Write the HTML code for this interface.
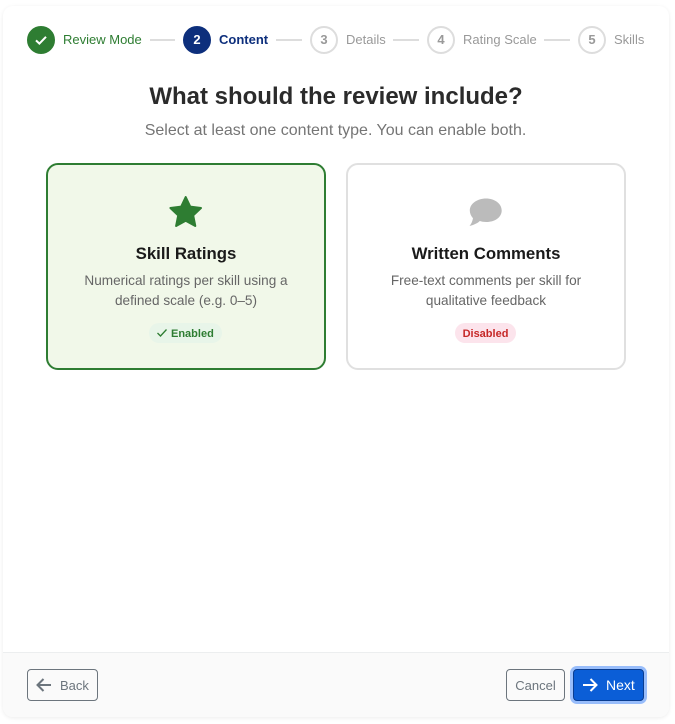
<!DOCTYPE html>
<html lang="en">
<head>
<meta charset="utf-8">
<title>Review</title>
<style>
*{box-sizing:border-box}
html,body{margin:0;padding:0;width:675px;height:724px;overflow:hidden;background:#fff;font-family:"Liberation Sans",sans-serif}
.abs,.c,.t,.l,.card,.btn,.badge{position:absolute}
#panel{position:absolute;left:3px;top:6px;width:666px;height:711px;background:#fff;border-radius:10px;box-shadow:0 1px 4px rgba(0,0,0,.08);overflow:hidden}
#foot{position:absolute;left:3px;top:652px;width:666px;height:65px;background:#fafafa;border-top:1px solid #eceeef;border-radius:0 0 10px 10px}
.c{top:26px;width:28px;height:28px;border-radius:50%;border:2px solid #ddd;color:#999;background:#fff;font-size:13px;font-weight:700;display:flex;align-items:center;justify-content:center;padding-bottom:1px}
.t{top:32px;font-size:13px;line-height:16px;color:#999;white-space:nowrap}
.l{top:39px;height:2px;background:#ddd}
h1{position:absolute;left:0;width:672px;top:81.500px;margin:0;text-align:center;font-size:24px;line-height:29px;font-weight:700;color:#2b2b2b}
.sub{position:absolute;left:0;width:671px;top:121px;text-align:center;font-size:16px;line-height:20px;color:#757575}
.card{top:163px;width:280px;height:207px;border-radius:12px;border:2px solid #e0e0e0;background:#fff}
.card.on{border-color:#2e7d32;background:#f1f8e9}
.ct{position:absolute;left:0;right:0;top:79px;text-align:center;font-size:16.800px;line-height:20px;font-weight:700;color:#1a1a1a}
.cd{position:absolute;left:0;right:0;top:106px;text-align:center;font-size:13.600px;line-height:20px;color:#666}
.badge{top:323px;height:20px;border-radius:10px;font-size:11px;line-height:22px;font-weight:700;white-space:nowrap}
.btn{top:669px;height:32px;border-radius:4px;border:1px solid #6c757d;font-size:13px;line-height:31px;color:#6c757d;white-space:nowrap}
</style>
</head>
<body>
<div id="panel"></div>
<div id="foot"></div>

<div class="c" style="left:27px;background:#2e7d32;border-color:#2e7d32">
<svg width="14" height="14" viewBox="0 0 14 14"><path d="M2 7.400 5.400 10.600 12 3.800" fill="none" stroke="#fff" stroke-width="2"/></svg>
</div>
<div class="t" style="left:63px;color:#2e7d32">Review Mode</div>
<div class="l" style="left:150px;width:25px"></div>
<div class="c" style="left:183px;background:#0d2f7c;border-color:#0d2f7c;color:#fff">2</div>
<div class="t" style="left:219px;color:#0d2f7c;font-weight:700">Content</div>
<div class="l" style="left:276px;width:26px"></div>
<div class="c" style="left:310px">3</div>
<div class="t" style="left:346px">Details</div>
<div class="l" style="left:393px;width:26px"></div>
<div class="c" style="left:427px">4</div>
<div class="t" style="left:463px">Rating Scale</div>
<div class="l" style="left:544px;width:26px"></div>
<div class="c" style="left:578px">5</div>
<div class="t" style="left:614px">Skills</div>

<h1>What should the review include?</h1>
<div class="sub">Select at least one content type. You can enable both.</div>

<div class="card on" style="left:46px">
<div class="ct">Skill Ratings</div>
<div class="cd">Numerical ratings per skill using a<br>defined scale (e.g. 0–5)</div>
</div>
<div class="card" style="left:346px">
<div class="ct">Written Comments</div>
<div class="cd">Free-text comments per skill for<br>qualitative feedback</div>
</div>

<svg class="abs" style="left:168px;top:195px" width="36" height="34" viewBox="0 0 36 34">
<path d="M17.700 2 22.200 11.600 33 13 25.200 20.400 27.300 31 17.700 25.800 8.100 31 10.200 20.400 2.400 13 13.200 11.600Z" fill="#2e7d32" stroke="#2e7d32" stroke-width="2" stroke-linejoin="round"/>
</svg>
<svg class="abs" style="left:468px;top:196px" width="36" height="32" viewBox="0 0 36 32">
<path d="M18 2.500C26.500 2.500 33.700 7.500 33.700 14.500 33.700 21.500 26.500 26 18.500 26 15.500 26 13.500 25.500 11.800 25 9 27.800 5 29 1.500 30 3.800 27.500 4.500 24.500 5 22.300 3 20 1.800 17.500 1.800 14.500 1.800 7.500 9.500 2.500 18 2.500Z" fill="#bbb"/>
</svg>

<div class="badge" style="left:149px;width:73px;background:#e8f5e9;color:#2e7d32;padding-left:22px">Enabled</div>
<svg class="abs" style="left:156px;top:328px" width="12" height="10" viewBox="0 0 12 10"><path d="M1.500 5 4.500 8 10.500 1.500" fill="none" stroke="#2e7d32" stroke-width="1.300"/></svg>
<div class="badge" style="left:455px;width:61px;background:#fce4ec;color:#c62828;text-align:center">Disabled</div>

<div class="btn" style="left:27px;width:71px;padding-left:32px">Back</div>
<svg class="abs" style="left:35px;top:677px" width="18" height="16" viewBox="0 0 18 16"><path d="M16 8H3M8.500 2 2.500 8 8.500 14" fill="none" stroke="#6c757d" stroke-width="2"/></svg>
<div class="btn" style="left:506px;width:59px;text-align:center">Cancel</div>
<div class="btn" style="left:573px;width:71px;background:#0b5ed7;border-color:#0a3d91;color:#fff;padding-left:32px;font-size:14px;line-height:30px;box-shadow:0 0 0 3px #98bdfb">Next</div>
<svg class="abs" style="left:581px;top:677px" width="18" height="16" viewBox="0 0 18 16"><path d="M2 8H15M9.500 2 15.500 8 9.500 14" fill="none" stroke="#fff" stroke-width="2"/></svg>
</body>
</html>
